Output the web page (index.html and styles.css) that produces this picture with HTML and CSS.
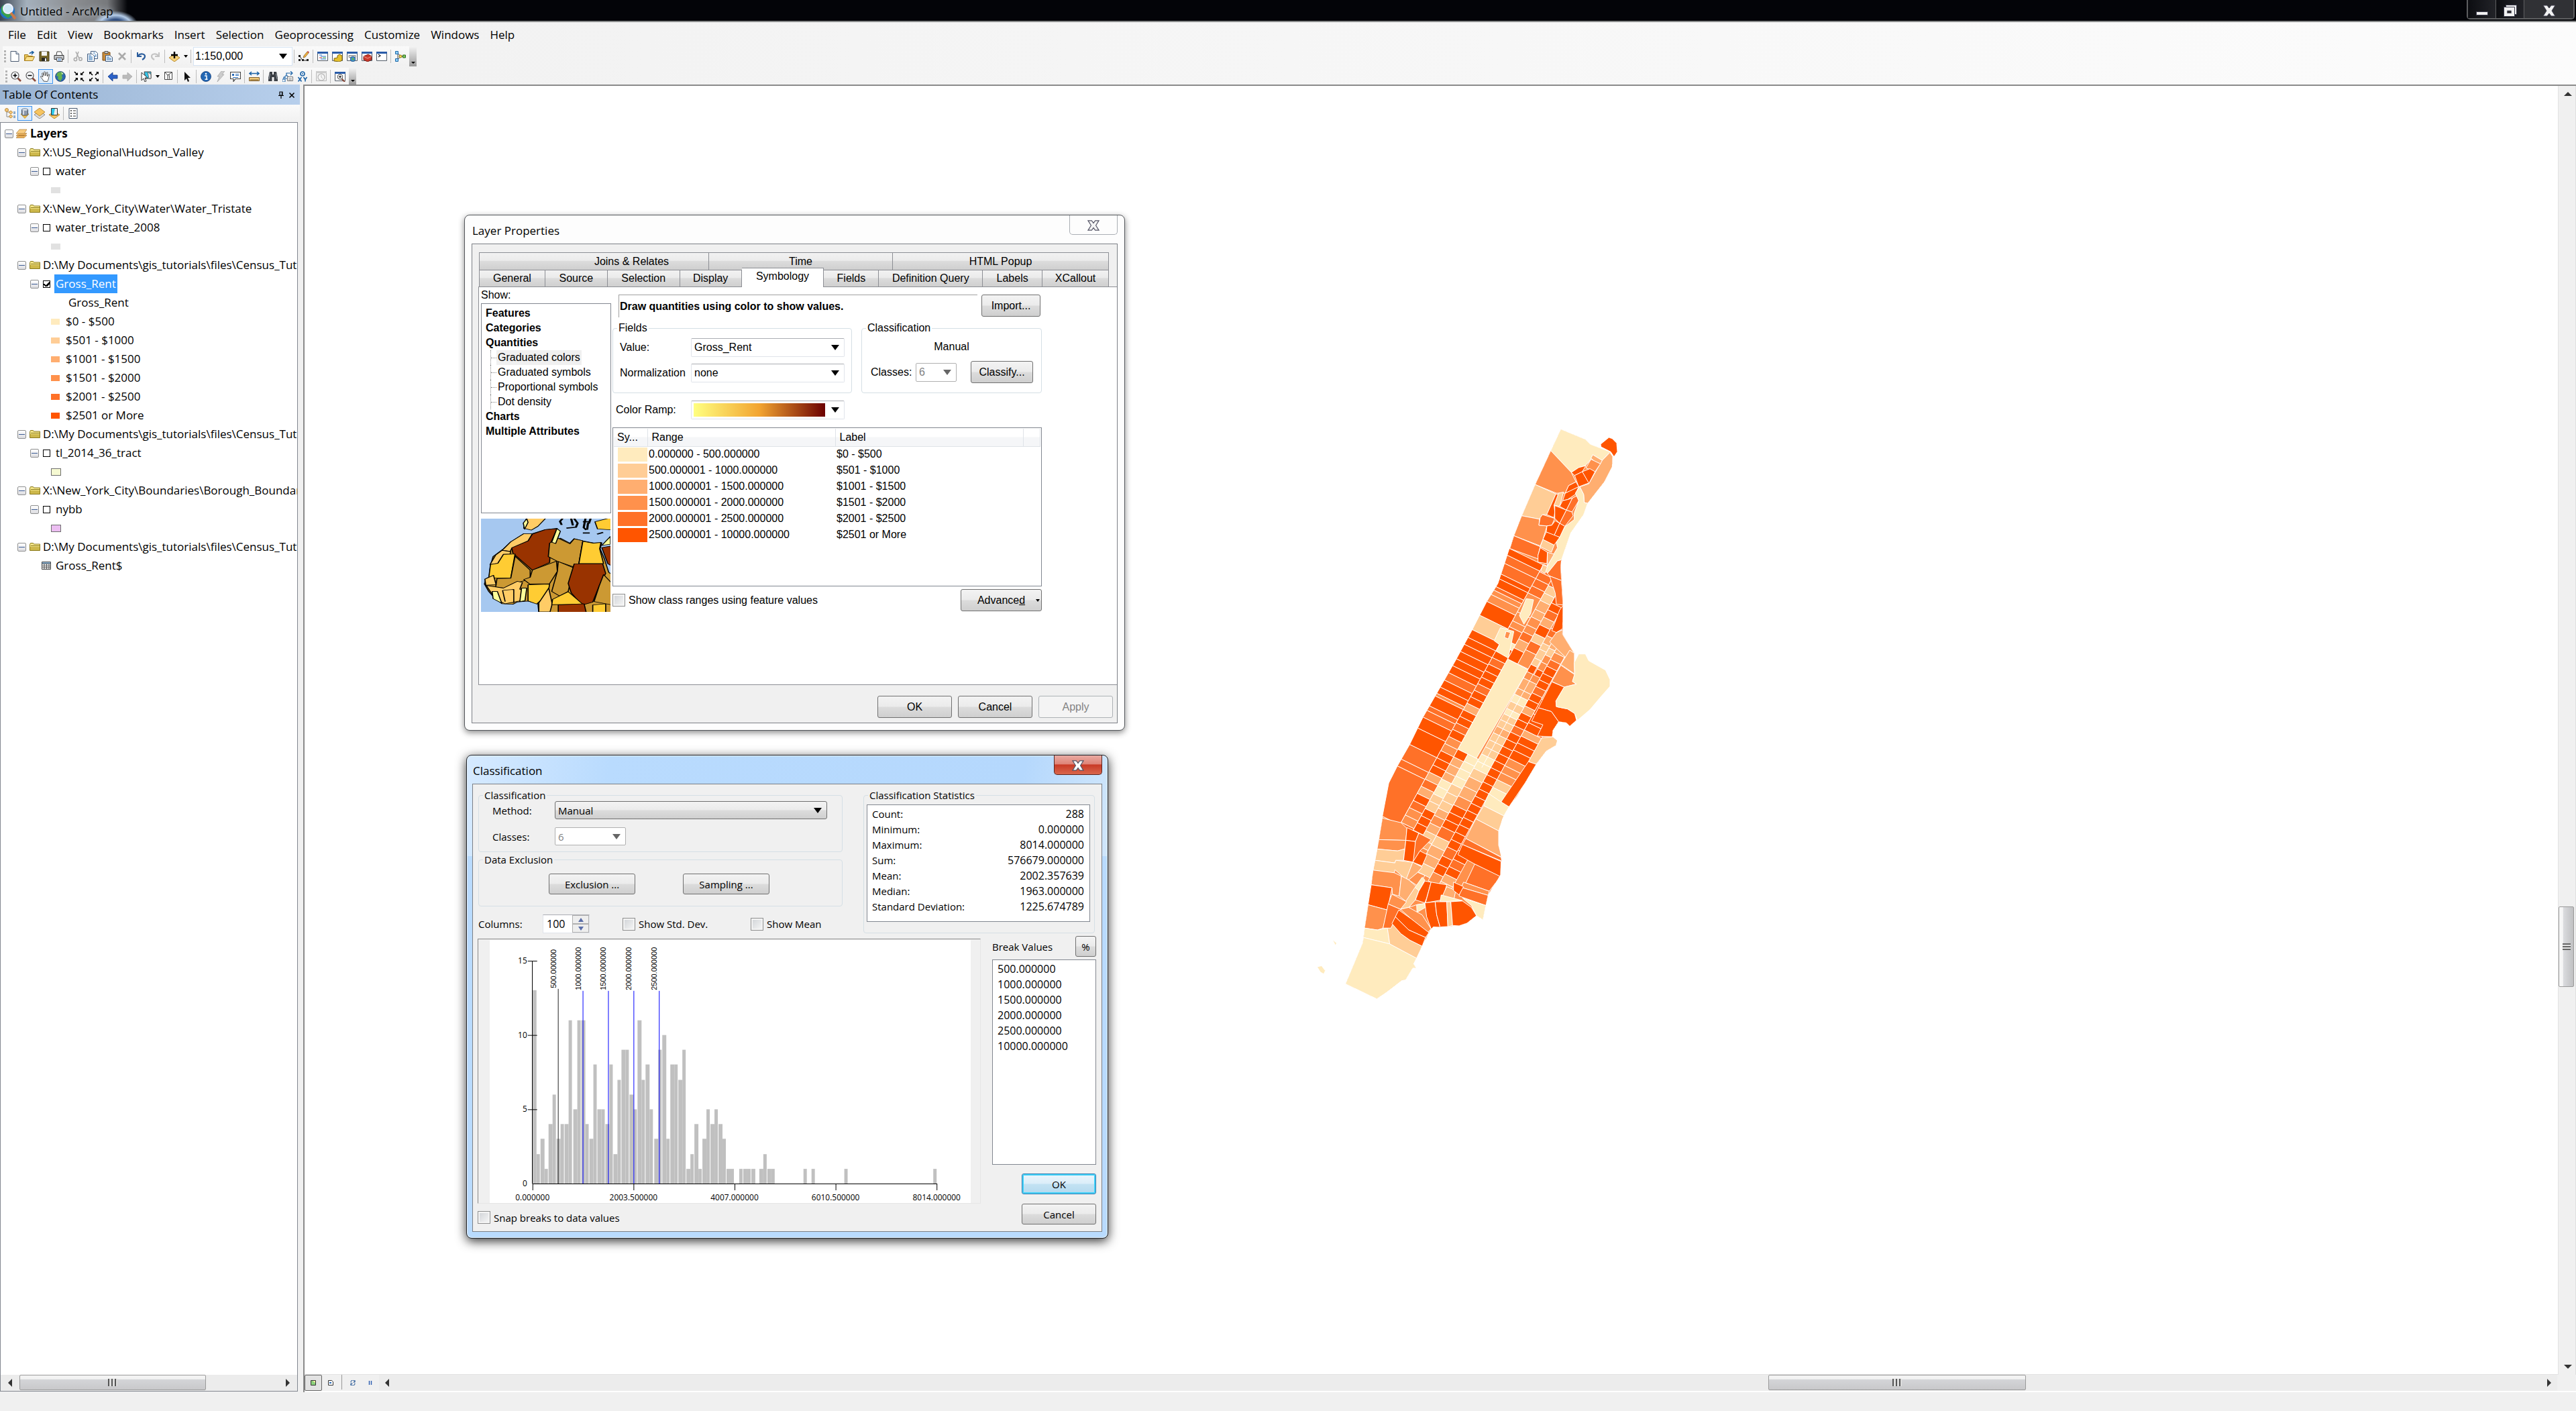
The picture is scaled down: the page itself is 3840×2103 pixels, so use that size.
FILE: index.html
```html
<!DOCTYPE html>
<html lang="en">
<head>
<meta charset="utf-8">
<title>Untitled - ArcMap</title>
<link rel="stylesheet" href="styles.css">
</head>
<body>
<svg class="defs" aria-hidden="true">
  <symbol id="i-new" viewBox="0 0 16 16"><path d="M2 .5h8l4 4v11H2z" fill="#fff" stroke="#4a5a70"/><path d="M10 .5v4h4" fill="#dbe6f2" stroke="#4a5a70"/></symbol>
  <symbol id="i-open" viewBox="0 0 16 16"><path d="M.5 14.500v-9h5l1 2h6v7z" fill="#e8c65a" stroke="#a67c1c"/><path d="M.5 14.500l3-6h12l-3 6z" fill="#fbe08a" stroke="#a67c1c"/><path d="M8 4c1-2 3-2 5-2m-2-2l3 2-3 3" fill="none" stroke="#1c5fa0" stroke-width="1.500"/></symbol>
  <symbol id="i-save" viewBox="0 0 16 16"><path d="M1 1h14v14H1z" fill="#7a6a2a" stroke="#3c3514"/><path d="M4 1h8v6H4z" fill="#f4f4f4"/><path d="M4 10h8v5H4z" fill="#2c2a22"/><path d="M9 11h2v4H9z" fill="#fff"/></symbol>
  <symbol id="i-print" viewBox="0 0 16 16"><path d="M4 6l1-5h6l2 5" fill="#fff" stroke="#444"/><path d="M1 6.500h14v6H1z" fill="#c9ccd0" stroke="#333"/><path d="M4 10h8l1 5.500H5z" fill="#fff" stroke="#444"/><path d="M6 12h5M6 14h5" stroke="#3a78c0"/></symbol>
  <symbol id="i-cut" viewBox="0 0 16 16"><path d="M5 1l5 10M9 1L6 10" stroke="#aaa" stroke-width="1.500"/><circle cx="4.500" cy="12.500" r="2.200" fill="none" stroke="#aaa" stroke-width="1.500"/><circle cx="12" cy="12" r="2.200" fill="none" stroke="#aaa" stroke-width="1.500"/></symbol>
  <symbol id="i-copy" viewBox="0 0 16 16"><path d="M5.500.5h7l3 3v8h-10z" fill="#fff" stroke="#3d5a80"/><path d="M.5 4.500h7l3 3v8H.5z" fill="#fff" stroke="#3d5a80"/><path d="M2 7h4M2 9h6M2 11h6M2 13h6M9 3h3M11 6h3M11 8h3" stroke="#2d72b8"/></symbol>
  <symbol id="i-paste" viewBox="0 0 16 16"><path d="M1 2h11v12H1z" fill="#c98c3c" stroke="#7a4c14"/><path d="M4 .5h5v3H4z" fill="#ccc" stroke="#555"/><path d="M5.500 6.500h6l4 3v6h-10z" fill="#fff" stroke="#3d5a80"/><path d="M7 9h4M7 11h7M7 13h7" stroke="#2d72b8"/></symbol>
  <symbol id="i-del" viewBox="0 0 16 16"><path d="M3 3l10 10M13 3L3 13" stroke="#aaa" stroke-width="2.600"/></symbol>
  <symbol id="i-undo" viewBox="0 0 16 16"><path d="M3 2v6h6" fill="none" stroke="#2a5c9c" stroke-width="2"/><path d="M4 7c3-4 10-3 10 1 0 3-2 4-4 5" fill="none" stroke="#2a5c9c" stroke-width="2.200"/></symbol>
  <symbol id="i-redo" viewBox="0 0 16 16"><path d="M13 2v6H7" fill="none" stroke="#c4c4c4" stroke-width="2"/><path d="M12 7c-3-4-10-3-10 1 0 3 2 4 4 5" fill="none" stroke="#c4c4c4" stroke-width="2.200"/></symbol>
  <symbol id="i-add" viewBox="0 0 16 16"><path d="M8 5l8 5-8 6-8-6z" fill="#f7d27a" stroke="#b98a2c"/><path d="M8 1v10M3 6h10" stroke="#000" stroke-width="2.400"/></symbol>
  <symbol id="i-editor" viewBox="0 0 16 16"><path d="M2 8l4 6h8" fill="none" stroke="#222"/><path d="M0 6h3v3H0zM5 12h3v3H5zM12 12h3v3h-3zM0 12h3v3H0z" fill="#222"/><path d="M7 10l1-3 5-6 2 2-5 6z" fill="#f0b040" stroke="#7a5a2a" stroke-width=".7"/><path d="M13 1l2 2 1-1-2-2z" fill="#c8343c"/></symbol>
  <symbol id="i-win" viewBox="0 0 16 16"><path d="M.5 1.500h15v13H.5z" fill="#fff" stroke="#555e6a"/><path d="M0 1h16v3H0z" fill="#2a5ca8"/></symbol>
  <symbol id="i-wtoc" viewBox="0 0 16 16"><use href="#i-win"/><path d="M3 6h4M5 8h8M5 12h8" stroke="#2a72c8"/><path d="M3 10h4" stroke="#c33"/><path d="M8 10h5" stroke="#4a4"/></symbol>
  <symbol id="i-wcat" viewBox="0 0 16 16"><use href="#i-win"/><path d="M8 7l3-2 4 2v7l-4 2-8-1v-4l5-1z" fill="#e6c02c" stroke="#7c6410"/></symbol>
  <symbol id="i-wsearch" viewBox="0 0 16 16"><use href="#i-win"/><path d="M3 6.500h10v3H3z" fill="#ddd" stroke="#888"/><circle cx="9" cy="12" r="3.800" fill="#3f8ed0" stroke="#1e4c80" stroke-width=".8"/><path d="M7 11l3-1 1 3-2 1z" fill="#65b54a"/></symbol>
  <symbol id="i-wtool" viewBox="0 0 16 16"><use href="#i-win"/><path d="M3 8l7-3 5 3v5l-6 3-6-3z" fill="#cc3a2c" stroke="#7a1c14"/><path d="M3 8l6 3 6-3" fill="none" stroke="#f4a090"/></symbol>
  <symbol id="i-wpy" viewBox="0 0 16 16"><use href="#i-win"/><path d="M3 5l3 2-3 2" fill="none" stroke="#222" stroke-width="1.200"/></symbol>
  <symbol id="i-model" viewBox="0 0 16 16"><path d="M4 3v10M4 3l4 5h5M4 13l4-5" fill="none" stroke="#444"/><path d="M.5.5h4v4h-4zM.5 11.500h4v4h-4z" fill="#8fd0f8" stroke="#1e68a8"/><circle cx="8" cy="8" r="2" fill="#ffe050" stroke="#8a7010"/><path d="M11.500 6h4v4h-4z" fill="#7cc860" stroke="#2c6c1c"/></symbol>
  <symbol id="i-zin" viewBox="0 0 16 16"><path d="M10 10l5 5" stroke="#8a4a3a" stroke-width="2.600"/><circle cx="6.500" cy="6.500" r="5.500" fill="#fafcff" stroke="#555" stroke-width="1.200"/><path d="M6.500 3.500v6M3.500 6.500h6" stroke="#000" stroke-width="1.600"/></symbol>
  <symbol id="i-zout" viewBox="0 0 16 16"><path d="M10 10l5 5" stroke="#8a4a3a" stroke-width="2.600"/><circle cx="6.500" cy="6.500" r="5.500" fill="#fafcff" stroke="#555" stroke-width="1.200"/><path d="M3.500 6.500h6" stroke="#000" stroke-width="1.600"/></symbol>
  <symbol id="i-hand" viewBox="0 0 16 16"><path d="M5 15C4 12 1 10 .5 8 1 7 3 8 4 9L2.500 3.500C3 2 4 3 4.500 4l1 3L5.500 1.500C6 .5 7 .5 7.500 1.500L8 7l1.500-5c.5-1 1.500-.5 1.500.5L10.500 8l2-3c1-.5 1.500 0 1 1-1 3-1 7-3 9.500z" fill="#fff" stroke="#444" stroke-width=".9"/></symbol>
  <symbol id="i-globe" viewBox="0 0 16 16"><circle cx="8" cy="8" r="7.400" fill="#2c68b0" stroke="#1a3c6c" stroke-width=".8"/><path d="M4 2l6-1 3 3-3 2 1 4-3 5-4-4 1-3-3-1z" fill="#63b04c"/><path d="M9 2l3 1-1 2z" fill="#e8f4d8"/></symbol>
  <symbol id="i-fin" viewBox="0 0 16 16"><path d="M1 1l4 4M15 1l-4 4M1 15l4-4M15 15l-4-4" stroke="#000" stroke-width="1.600"/><path d="M6 2v4H2zM10 2v4h4zM6 14v-4H2zM10 14v-4h4z"/></symbol>
  <symbol id="i-fout" viewBox="0 0 16 16"><path d="M2 2l4 4M14 2l-4 4M2 14l4-4M14 14l-4-4" stroke="#000" stroke-width="1.600"/><path d="M1 5V1h4zM15 5V1h-4zM1 11v4h4zM15 11v4h-4z"/></symbol>
  <symbol id="i-back" viewBox="0 0 16 16"><path d="M1 8l7-6v4h7v5H8v4z" fill="#2c62c8" stroke="#173c86" stroke-width=".8"/></symbol>
  <symbol id="i-fwd" viewBox="0 0 16 16"><path d="M15 8L8 2v4H1v5h7v4z" fill="#bbb" stroke="#aaa" stroke-width=".8"/></symbol>
  <symbol id="i-sel" viewBox="0 0 16 16"><path d="M5 1h10v10H7z" fill="#35c4e8" stroke="#444"/><path d="M10 1l5 4v6l-3 0z" fill="#eee" stroke="#555" stroke-width=".8"/><path d="M1 2v12l3-3 2 5 2-1-2-5h4z" fill="#fff" stroke="#222" stroke-width=".9"/></symbol>
  <symbol id="i-clear" viewBox="0 0 16 16"><path d="M2.500 1.500h11v11h-11z" fill="#fff" stroke="#444"/><path d="M3 2l4 4v6M7 6l6-4M9 5l1 7" fill="none" stroke="#444"/></symbol>
  <symbol id="i-arrow" viewBox="0 0 16 16"><path d="M4 1v13l3-3 2 5 2-1-2-5h4z" fill="#111"/></symbol>
  <symbol id="i-info" viewBox="0 0 16 16"><circle cx="8" cy="8" r="7.500" fill="#2468b4" stroke="#163e78" stroke-width=".8"/><circle cx="8" cy="4" r="1.300" fill="#fff"/><path d="M6 7h3v5h1M6.500 12.200h4" fill="none" stroke="#fff" stroke-width="1.500"/></symbol>
  <symbol id="i-bolt" viewBox="0 0 16 16"><path d="M9 0h5l-4 5h3L3 16l3-8H3z" fill="#ccc" stroke="#aaa" stroke-width=".8"/></symbol>
  <symbol id="i-html" viewBox="0 0 16 16"><path d="M.5 1.500h15v10H8l-3 4v-4H.5z" fill="#fff" stroke="#444" stroke-width="1.200"/><path d="M3 4h3v3H3z" fill="#2a6cb8"/><path d="M8 4.500h5M8 6.500h5M4 9.500h8" stroke="#2a6cb8" stroke-width="1.200"/></symbol>
  <symbol id="i-meas" viewBox="0 0 16 16"><path d="M2 3.500h12M4 1L1 3.500 4 6M12 1l3 2.500L12 6" fill="none" stroke="#1b62a6" stroke-width="1.500"/><path d="M.5 9.500h15v5H.5z" fill="#f0c878" stroke="#7c5c2c"/><path d="M3 12v2M5 12v2M7 12v2M9 12v2M11 12v2M13 12v2" stroke="#5c4018" stroke-width=".8"/></symbol>
  <symbol id="i-bino" viewBox="0 0 16 16"><path d="M3 1h4v4h2V1h4l2 9v5H9.500V9h-3v6H1v-5z" fill="#3c4046"/><path d="M3.500 4L2 12M12.500 4L14 12" stroke="#9aa0a8"/></symbol>
  <symbol id="i-route" viewBox="0 0 16 16"><path d="M2 14V9h4V3h8M12 0l3 3-3 3" fill="none" stroke="#1b62a6" stroke-width="1.200"/><path d="M0 12h4v4H0zM4 7h4v4H4z" fill="#fff" stroke="#1b62a6"/><path d="M7.500 8.500h8v6h-8z" fill="#fff" stroke="#777"/><path d="M9 11h5M9 13h5" stroke="#888"/></symbol>
  <symbol id="i-xy" viewBox="0 0 16 16"><circle cx="8" cy="4" r="3" fill="#fff" stroke="#1b62a6" stroke-width="1.600"/><circle cx="8" cy="4" r="1" fill="#1b62a6"/><path d="M1.500 9l5 6.500M6.500 9l-5 6.500M9.500 9l2.500 3.500L14.500 9M12 12v3.500" fill="none" stroke="#1b62a6" stroke-width="1.600"/></symbol>
  <symbol id="i-time" viewBox="0 0 16 16"><path d="M.5.5h15v14H.5z" fill="#eee" stroke="#bbb"/><path d="M0 0h16v3H0z" fill="#ccc"/><circle cx="8" cy="9" r="5" fill="#f5f5f5" stroke="#bbb" stroke-width="1.300"/><path d="M8 6v3l2 2" fill="none" stroke="#bbb"/></symbol>
  <symbol id="i-view" viewBox="0 0 16 16"><use href="#i-win"/><path d="M10 11l5 5" stroke="#8a4a3a" stroke-width="2.200"/><circle cx="8" cy="8.500" r="3.800" fill="#fff" stroke="#444"/><path d="M8 6.500v4M6 8.500h4" stroke="#000"/></symbol>
  <symbol id="i-tlist" viewBox="0 0 16 16"><path d="M3 4v9h4M3 6h4" fill="none" stroke="#888"/><circle cx="3" cy="3" r="2.500" fill="#f6c878" stroke="#b98a3c"/><path d="M9 4l3 2.500-3 2.500-3-2.500zM9 10l3 2.500L9 15l-3-2.500z" fill="#f6c878" stroke="#b98a3c"/><path d="M13 6h3M13 8h3M13 12h3M13 14h3" stroke="#27639c"/></symbol>
  <symbol id="i-cyl" viewBox="0 0 16 16"><path d="M2 9l6-1 6 1-6 6.500z" fill="#f4c04c" stroke="#c08c20" stroke-width=".8"/><path d="M3.500 2.500c0-2 9-2 9 0v7c0 2-9 2-9 0z" fill="#8b98aa" stroke="#465468"/><ellipse cx="8" cy="2.500" rx="4" ry="1.300" fill="#dfe6ee"/><path d="M6 4v6" stroke="#e8eef4" stroke-width="1.500"/></symbol>
  <symbol id="i-dia" viewBox="0 0 16 16"><path d="M8 5l8 5-8 6-8-6z" fill="#ddd" stroke="#777" stroke-width=".8"/><path d="M8 0l8 6-8 6-8-6z" fill="#f6c460" stroke="#b07c20" stroke-width=".8"/></symbol>
  <symbol id="i-tsel" viewBox="0 0 16 16"><path d="M8 6l8 4-8 6-8-6z" fill="#f6c460" stroke="#b07c20" stroke-width=".8"/><path d="M3.500.5h9v10h-9z" fill="#eee" stroke="#333"/><path d="M4 1h5L7 10H4z" fill="#2cc8e8"/></symbol>
  <symbol id="i-opt" viewBox="0 0 16 16"><path d="M2 .5h12v15H2z" fill="#fff" stroke="#4a5a70"/><circle cx="5" cy="4" r="1" fill="#333"/><circle cx="5" cy="8" r="1" fill="#333"/><circle cx="5" cy="12" r="1" fill="#333"/><path d="M8 4h4M8 8h4M8 12h4" stroke="#333"/></symbol>
  <symbol id="i-folder" viewBox="0 0 16 12"><path d="M.5 2.500l1-2h4l1 1.500h9v9.500H.5z" fill="#f3e58a" stroke="#8a7a1c"/><path d="M2 4.500h13" stroke="#8a7a1c"/><path d="M1 6h14v5H1z" fill="#cdb84c"/></symbol>
  <symbol id="i-layers" viewBox="0 0 16 14"><path d="M4 9.500h12L12 13.500H0zM4 6.500h12L12 10.500H0z" fill="#efb45c" stroke="#a8742c" stroke-width=".7"/><path d="M5 1h11l-4 6H0z" fill="#f8cc80" stroke="#b07c34" stroke-width=".7"/></symbol>
  <symbol id="i-table" viewBox="0 0 14 12"><path d="M.5.5h13v11H.5z" fill="#fff" stroke="#444"/><path d="M1 1h12v2H1z" fill="#8ab0d0"/><path d="M0 3.500h14M0 6.500h14M0 9h14M4 3v9M7.500 3v9M11 3v9" stroke="#555"/></symbol>
</svg>

<header class="titlebar">
  <svg class="app-icon" viewBox="0 0 24 28"><circle cx="11" cy="14" r="11" fill="#1f73c4"/><path d="M2 8c4-6 12-7 17-2l-4 6 5 6-8 6-6-4-4-4z" fill="#3aa04c"/><circle cx="12" cy="10" r="7" fill="#cfeaf8" stroke="#eef" stroke-width="2"/><path d="M16 16l7 9" stroke="#c87a4c" stroke-width="4"/></svg>
  <h1>Untitled - ArcMap</h1>
  <div class="win-ctl">
    <button aria-label="Minimize"><svg viewBox="0 0 20 18"><path d="M1.500 10.500h17v5h-17z" fill="#f2f2f2" stroke="#3c3c4c"/></svg></button>
    <button aria-label="Restore"><svg viewBox="0 0 20 18"><path d="M3.500.5h16v14h-16z" fill="#f2f2f2" stroke="#3c3c4c"/><path d="M.5 3.500h16v14H.5z" fill="#f2f2f2" stroke="#3c3c4c"/><path d="M5.500 9h6v3.500h-6z" fill="#222" stroke="#667"/></svg></button>
    <button class="x" aria-label="Close"><svg viewBox="0 0 20 18"><path d="M1 1h6l3 4 3-4h6l-5 8 5 8h-6l-3-4-3 4H1l5-8z" fill="#f2f2f2" stroke="#3c3c4c"/></svg></button>
  </div>
</header>

<nav class="menubar"><button>File</button><button>Edit</button><button>View</button><button>Bookmarks</button><button>Insert</button><button>Selection</button><button>Geoprocessing</button><button>Customize</button><button>Windows</button><button>Help</button></nav>

<div class="toolbars">
  <div class="toolbar standard">
    <i class="grip"></i>
    <button aria-label="New"><svg><use href="#i-new"/></svg></button><button aria-label="Open"><svg><use href="#i-open"/></svg></button><button aria-label="Save"><svg><use href="#i-save"/></svg></button><button aria-label="Print"><svg><use href="#i-print"/></svg></button><i class="sep"></i>
    <button aria-label="Cut"><svg><use href="#i-cut"/></svg></button><button aria-label="Copy"><svg><use href="#i-copy"/></svg></button><button aria-label="Paste"><svg><use href="#i-paste"/></svg></button><button aria-label="Delete"><svg><use href="#i-del"/></svg></button><i class="sep"></i>
    <button aria-label="Undo"><svg><use href="#i-undo"/></svg></button><button aria-label="Redo"><svg><use href="#i-redo"/></svg></button><i class="sep"></i>
    <button aria-label="Add Data"><svg><use href="#i-add"/></svg></button><button class="drop" aria-label="Add Data menu"><i class="caret"></i></button><i class="sep"></i>
    <span class="combo scale"><select aria-label="Map scale"><option>1:150,000</option></select></span><i class="sep"></i>
    <button aria-label="Editor Toolbar"><svg><use href="#i-editor"/></svg></button><i class="sep"></i>
    <button aria-label="Table Of Contents"><svg><use href="#i-wtoc"/></svg></button><button aria-label="Catalog"><svg><use href="#i-wcat"/></svg></button><button aria-label="Search"><svg><use href="#i-wsearch"/></svg></button><button aria-label="ArcToolbox"><svg><use href="#i-wtool"/></svg></button><button aria-label="Python"><svg><use href="#i-wpy"/></svg></button><i class="sep"></i>
    <button aria-label="ModelBuilder"><svg><use href="#i-model"/></svg></button>
    <button class="more" aria-label="Toolbar options"><i class="caret"></i></button>
  </div>
  <div class="toolbar tools">
    <i class="grip"></i>
    <button aria-label="Zoom In"><svg><use href="#i-zin"/></svg></button><button aria-label="Zoom Out"><svg><use href="#i-zout"/></svg></button><button class="on" aria-label="Pan"><svg><use href="#i-hand"/></svg></button><button aria-label="Full Extent"><svg><use href="#i-globe"/></svg></button><i class="sep"></i>
    <button aria-label="Fixed Zoom In"><svg><use href="#i-fin"/></svg></button><button aria-label="Fixed Zoom Out"><svg><use href="#i-fout"/></svg></button><i class="sep"></i>
    <button aria-label="Back"><svg><use href="#i-back"/></svg></button><button aria-label="Forward"><svg><use href="#i-fwd"/></svg></button><i class="sep"></i>
    <button aria-label="Select Features"><svg><use href="#i-sel"/></svg></button><button class="drop" aria-label="Selection menu"><i class="caret"></i></button><button aria-label="Clear Selection"><svg><use href="#i-clear"/></svg></button><i class="sep"></i>
    <button aria-label="Select Elements"><svg><use href="#i-arrow"/></svg></button><i class="sep"></i>
    <button aria-label="Identify"><svg><use href="#i-info"/></svg></button><button aria-label="Hyperlink"><svg><use href="#i-bolt"/></svg></button><button aria-label="HTML Popup"><svg><use href="#i-html"/></svg></button><i class="sep"></i>
    <button aria-label="Measure"><svg><use href="#i-meas"/></svg></button><i class="sep"></i>
    <button aria-label="Find"><svg><use href="#i-bino"/></svg></button><button aria-label="Find Route"><svg><use href="#i-route"/></svg></button><button aria-label="Go To XY"><svg><use href="#i-xy"/></svg></button><i class="sep"></i>
    <button aria-label="Time Slider"><svg><use href="#i-time"/></svg></button><i class="sep"></i>
    <button aria-label="Viewer Window"><svg><use href="#i-view"/></svg></button>
    <button class="more" aria-label="Toolbar options"><i class="caret"></i></button>
  </div>
</div>

<div class="main">
  <aside class="toc">
    <div class="toc-head"><h2>Table Of Contents</h2>
      <button aria-label="Auto hide"><svg viewBox="0 0 10 12"><path d="M3 1h4v5H3zM6.500 1v5M1 6.500h8M5 7v4" fill="none" stroke="#000" stroke-width="1.200"/></svg></button>
      <button aria-label="Close"><svg viewBox="0 0 10 12"><path d="M1.500 2.500l7 7M8.500 2.500l-7 7" stroke="#000" stroke-width="1.600"/></svg></button></div>
    <div class="toolbar toc-tools">
      <button aria-label="List By Drawing Order"><svg><use href="#i-tlist"/></svg></button><button class="on" aria-label="List By Source"><svg><use href="#i-cyl"/></svg></button><button aria-label="List By Visibility"><svg><use href="#i-dia"/></svg></button><button aria-label="List By Selection"><svg><use href="#i-tsel"/></svg></button><i class="sep"></i><button aria-label="Options"><svg><use href="#i-opt"/></svg></button>
    </div>
    <div class="tree-box">
      <ul class="tree">
        <li class="l0"><button class="exp" aria-label="Collapse"></button><svg class="ic"><use href="#i-layers"/></svg><b>Layers</b></li>
        <li class="l1"><button class="exp" aria-label="Collapse"></button><svg class="ic"><use href="#i-folder"/></svg><span>X:\US_Regional\Hudson_Valley</span></li>
        <li class="l2"><button class="exp" aria-label="Collapse"></button><input type="checkbox" id="t1"><label for="t1">water</label></li>
        <li class="sw"><i class="w"></i></li>
        <li class="l1"><button class="exp" aria-label="Collapse"></button><svg class="ic"><use href="#i-folder"/></svg><span>X:\New_York_City\Water\Water_Tristate</span></li>
        <li class="l2"><button class="exp" aria-label="Collapse"></button><input type="checkbox" id="t2"><label for="t2">water_tristate_2008</label></li>
        <li class="sw"><i class="w"></i></li>
        <li class="l1"><button class="exp" aria-label="Collapse"></button><svg class="ic"><use href="#i-folder"/></svg><span>D:\My Documents\gis_tutorials\files\Census_Tut</span></li>
        <li class="l2"><button class="exp" aria-label="Collapse"></button><input type="checkbox" id="t3" checked><label for="t3" class="hl">Gross_Rent</label></li>
        <li class="field">Gross_Rent</li>
        <li class="sw"><i class="c1"></i>$0 - $500</li>
        <li class="sw"><i class="c2"></i>$501 - $1000</li>
        <li class="sw"><i class="c3"></i>$1001 - $1500</li>
        <li class="sw"><i class="c4"></i>$1501 - $2000</li>
        <li class="sw"><i class="c5"></i>$2001 - $2500</li>
        <li class="sw"><i class="c6"></i>$2501 or More</li>
        <li class="l1"><button class="exp" aria-label="Collapse"></button><svg class="ic"><use href="#i-folder"/></svg><span>D:\My Documents\gis_tutorials\files\Census_Tut</span></li>
        <li class="l2"><button class="exp" aria-label="Collapse"></button><input type="checkbox" id="t4"><label for="t4">tl_2014_36_tract</label></li>
        <li class="sw"><i class="tract"></i></li>
        <li class="l1"><button class="exp" aria-label="Collapse"></button><svg class="ic"><use href="#i-folder"/></svg><span>X:\New_York_City\Boundaries\Borough_Boundar</span></li>
        <li class="l2"><button class="exp" aria-label="Collapse"></button><input type="checkbox" id="t5"><label for="t5">nybb</label></li>
        <li class="sw"><i class="nybb"></i></li>
        <li class="l1"><button class="exp" aria-label="Collapse"></button><svg class="ic"><use href="#i-folder"/></svg><span>D:\My Documents\gis_tutorials\files\Census_Tut</span></li>
        <li class="tbl"><svg class="ic"><use href="#i-table"/></svg><span>Gross_Rent$</span></li>
      </ul>
      <div class="hscroll"><button class="al" aria-label="Scroll left"></button><div class="track"><i class="thumb toc-thumb"></i></div><button class="ar" aria-label="Scroll right"></button></div>
    </div>
  </aside>

  <section class="data-view">
    <div class="canvas">
      <svg class="nyc" viewBox="0 0 1560 1568" preserveAspectRatio="none" role="img" aria-label="Median gross rent by census tract"></svg>

      <div class="dialog props" role="dialog" aria-label="Layer Properties">
        <div class="dlg-title"><h2>Layer Properties</h2><button class="dlg-x" aria-label="Close"><svg viewBox="0 0 20 18"><path d="M1 1h6l3 4 3-4h6l-5 8 5 8h-6l-3-4-3 4H1l5-8z" fill="#f4f4f4" stroke="#556" stroke-width="1.300"/></svg></button></div>
        <div class="client">
          <div class="tabs r1"><button>Joins &amp; Relates</button><button>Time</button><button>HTML Popup</button></div>
          <div class="tabs r2"><button>General</button><button>Source</button><button>Selection</button><button>Display</button><button class="active">Symbology</button><button>Fields</button><button>Definition Query</button><button>Labels</button><button>XCallout</button></div>
          <div class="panel">
            <div class="show">
              <div class="show-lbl">Show:</div>
              <ul class="show-list">
                <li><b>Features</b></li><li><b>Categories</b></li><li><b>Quantities</b></li>
                <li class="sub"><span class="cur">Graduated colors</span></li><li class="sub"><span>Graduated symbols</span></li><li class="sub"><span>Proportional symbols</span></li><li class="sub last"><span>Dot density</span></li>
                <li><b>Charts</b></li><li><b>Multiple Attributes</b></li>
              </ul>
              <svg class="africa" viewBox="56 221 300 415" preserveAspectRatio="none" aria-hidden="true">
                <path d="M56 221h300v415H56z" fill="#a6c8f0"/>
                <g stroke="#000" stroke-width="2.500" stroke-linejoin="round">
                  <path d="M155 288L175 288 205 270 232 264 238 285 228 322 240 308 262 330 272 310 292 320 318 330 336 328 332 355 342 400 352 460 360 470V640H190L188 600 165 588 140 592 130 602 105 600 88 575 74 545 64 512 68 488 75 480 78 430 84 390 108 355 125 325z" fill="#c93"/>
                  <path d="M162 215h46l-20 40-15 17-18-8z" fill="#fc6"/><path d="M162 221l-8 20 3 27 8-30z" fill="#ff9"/>
                  <path d="M245 221l-6 12 4 16M272 221l8 20-4 18-22 4M265 221l4 30M298 221l-4 40 6 10M292 235h14M304 240l-2 30M310 221l-4 22" fill="none" stroke-width="5"/>
                  <path d="M292 285h16M325 290l14-8" stroke-width="5"/>
                  <path d="M320 235l40-20v56l-34-4z" fill="#fc3"/><path d="M356 300l-20 40 20-5z" fill="#ff9"/><path d="M336 350l24-8v90l-10-10z" fill="#930"/>
                  <path d="M205 270l27-4-14 62-3 88-40 34-45-75-3-25 38-30 10-30z" fill="#930"/>
                  <path d="M155 288l20 0-10 32-37 30-4 16-19-4 20-38z" fill="#fc6"/>
                  <path d="M105 362l20 6-2 12-15 0-13 40-18 5 13-42z" fill="#fc6"/>
                  <path d="M95 420l13-40 27-2-10 107-51 0 4-60z" fill="#fc3"/>
                  <path d="M135 388l35 62v40l-38 20-14 22-28-6 3-38 32-2z" fill="#c93"/>
                  <path d="M175 450l56-40 2 46-18 54-46 2-14-20 15-10z" fill="#c93"/>
                  <path d="M215 330l20-22 27 25 10-22 20 8-9 100-5 22-46-31-20-20z" fill="#c93"/>
                  <path d="M232 265l8 12-11 55-9-6z" fill="#ff9"/>
                  <path d="M292 322l24 8 18-3-3 28 9 66-57-1z" fill="#fc3"/>
                  <path d="M235 412l36 28-13 105-20 20-18-20 13-90z" fill="#c93"/>
                  <path d="M272 422h66l7 43-15 55-15 72-25 14-25-55-7-42z" fill="#930"/>
                  <path d="M165 515l50-3-4 45-26 44-20-14z" fill="#fc3"/>
                  <path d="M65 490l20-17 6 42-24 2z" fill="#fc6"/>
                  <path d="M68 518l40 12 32-30 12 5-6 30 14 10-8 40-40 15-22-20z" fill="#fc6"/><path d="M82 545l12 0 10 52-20-20zM150 530h12l-4 56-12 4z" fill="#ff9"/><path d="M106 540l26-4v60M106 540l6 50" fill="none"/>
                  <path d="M213 530l8 70-5 36h-26v-40z" fill="#fc6"/>
                  <path d="M222 580l36-34 34 56-72 2z" fill="#fc3"/><path d="M235 605l60-5 5 40h-65z" fill="#930"/><path d="M315 605l30-5v40h-30z" fill="#fc3"/>
                  <path d="M340 470l20 40v95l-42-15 12-70z" fill="#c93"/>
                </g>
              </svg>
            </div>
            <div class="quant">
              <div class="desc-row"><b class="desc">Draw quantities using color to show values.</b><button class="btn">Import...</button></div>
              <div class="groups">
                <fieldset class="fields"><legend>Fields</legend>
                  <label for="val">Value:</label><span class="combo"><select id="val"><option>Gross_Rent</option></select></span>
                  <label for="norm">Normalization</label><span class="combo"><select id="norm"><option>none</option></select></span>
                </fieldset>
                <fieldset class="cls"><legend>Classification</legend>
                  <div class="manual">Manual</div>
                  <div class="cls-row"><label for="ncls">Classes:</label><span class="combo off"><select id="ncls" disabled><option>6</option></select></span><button class="btn">Classify...</button></div>
                </fieldset>
              </div>
              <div class="ramp-row"><span id="ramp-lbl">Color Ramp:</span><button class="combo ramp" aria-labelledby="ramp-lbl"><i></i></button></div>
              <div class="grid-box">
                <table>
                  <thead><tr><th>Sy...</th><th>Range</th><th>Label</th><th></th></tr></thead>
                  <tbody>
                    <tr><td><i class="c1"></i></td><td>0.000000 - 500.000000</td><td>$0 - $500</td><td></td></tr>
                    <tr><td><i class="c2"></i></td><td>500.000001 - 1000.000000</td><td>$501 - $1000</td><td></td></tr>
                    <tr><td><i class="c3"></i></td><td>1000.000001 - 1500.000000</td><td>$1001 - $1500</td><td></td></tr>
                    <tr><td><i class="c4"></i></td><td>1500.000001 - 2000.000000</td><td>$1501 - $2000</td><td></td></tr>
                    <tr><td><i class="c5"></i></td><td>2000.000001 - 2500.000000</td><td>$2001 - $2500</td><td></td></tr>
                    <tr><td><i class="c6"></i></td><td>2500.000001 - 10000.000000</td><td>$2501 or More</td><td></td></tr>
                  </tbody>
                </table>
              </div>
              <div class="adv-row"><label class="check"><input type="checkbox">Show class ranges using feature values</label><button class="btn adv">Advance<u>d</u><i class="caret"></i></button></div>
            </div>
          </div>
          <div class="dlg-foot"><button class="btn">OK</button><button class="btn">Cancel</button><button class="btn" disabled>Apply</button></div>
        </div>
      </div>

      <div class="dialog classify" role="dialog" aria-label="Classification">
        <div class="dlg-title"><h2>Classification</h2><button class="dlg-x red" aria-label="Close"><svg viewBox="0 0 20 18"><path d="M1 1h6l3 4 3-4h6l-5 8 5 8h-6l-3-4-3 4H1l5-8z" fill="#fff" stroke="#556" stroke-width="1.300"/></svg></button></div>
        <div class="client">
          <div class="top">
            <div class="opts">
              <fieldset class="method"><legend>Classification</legend>
                <label for="meth">Method:</label><span class="combo grad"><select id="meth"><option>Manual</option></select></span>
                <label for="cls2">Classes:</label><span class="combo off short"><select id="cls2" disabled><option>6</option></select></span>
              </fieldset>
              <fieldset class="excl"><legend>Data Exclusion</legend><button class="btn">Exclusion ...</button><button class="btn">Sampling ...</button></fieldset>
              <div class="cols"><label for="ncol">Columns:</label><span class="spin"><input type="number" id="ncol" value="100"><span><button aria-label="Increase"><i class="up"></i></button><button aria-label="Decrease"><i class="down"></i></button></span></span><label class="check std"><input type="checkbox">Show Std. Dev.</label><label class="check"><input type="checkbox">Show Mean</label></div>
            </div>
            <fieldset class="stats"><legend>Classification Statistics</legend>
              <table>
                <tr><th>Count:</th><td>288</td></tr><tr><th>Minimum:</th><td>0.000000</td></tr><tr><th>Maximum:</th><td>8014.000000</td></tr><tr><th>Sum:</th><td>576679.000000</td></tr><tr><th>Mean:</th><td>2002.357639</td></tr><tr><th>Median:</th><td>1963.000000</td></tr><tr><th>Standard Deviation:</th><td>1225.674789</td></tr>
              </table>
            </fieldset>
          </div>
          <div class="bottom">
            <div class="hist-col">
              <div class="hist"><svg id="hist" viewBox="0 0 717 393" role="img" aria-label="Histogram of gross rent"></svg></div>
              <label class="check"><input type="checkbox">Snap breaks to data values</label>
            </div>
            <div class="breaks">
              <div class="brk-head"><span>Break Values</span><button class="btn">%</button></div>
              <ul><li>500.000000</li><li>1000.000000</li><li>1500.000000</li><li>2000.000000</li><li>2500.000000</li><li>10000.000000</li></ul>
              <button class="btn def">OK</button><button class="btn">Cancel</button>
            </div>
          </div>
        </div>
      </div>
    </div>
    <div class="vscroll"><button class="au" aria-label="Scroll up"></button><div class="track"><i class="thumb"></i></div><button class="ad" aria-label="Scroll down"></button></div>
    <div class="view-bar">
      <button class="vb on" aria-label="Data View"><svg viewBox="0 0 8 8"><path d="M.5.5h7v7h-7z" fill="#8bd07c" stroke="#333"/><path d="M3 1h4v3z" fill="#fff3a0"/></svg></button>
      <button class="vb" aria-label="Layout View"><svg viewBox="0 0 8 8"><path d="M.5.5h5l2 2v5h-7z" fill="#fff" stroke="#333"/><path d="M2 3h3v2H2z" fill="#2a6cb8"/></svg></button>
      <i class="vsep"></i>
      <button class="vb" aria-label="Refresh"><svg viewBox="0 0 8 8"><path d="M1 3.500A3 3 0 0 1 7 2.500M7 4.500A3 3 0 0 1 1 5.500M7 0v3H4.500M1 8V5h2.500" fill="none" stroke="#1b4f90"/></svg></button>
      <button class="vb" aria-label="Pause Drawing"><svg viewBox="0 0 8 8"><path d="M2.500 1v6M5.500 1v6" stroke="#2a5cb0" stroke-width="1.400"/></svg></button>
      <div class="hscroll"><button class="al" aria-label="Scroll left"></button><div class="track"><i class="thumb map-thumb"></i></div><button class="ar" aria-label="Scroll right"></button></div>
    </div>
  </section>
</div>
<footer class="status"></footer>
<script src="map.js"></script>
</body>
</html>
```
FILE: styles.css
```css
* { box-sizing: border-box; }
:root {
  --c1: #ffebbe; --c2: #ffcd96; --c3: #ffae70; --c4: #ff914c; --c5: #ff7128; --c6: #ff5500;
  --ui: "Open Sans", "Noto Sans", sans-serif;
  --sans: "Liberation Sans", Arial, sans-serif;
}
body { margin: 0; min-height: 100vh; display: flex; flex-direction: column; background: #f0f0f0; color: #000; font: 17px/22px var(--ui); overflow: hidden; }
h1, h2 { margin: 0; font: inherit; }
ul { margin: 0; padding: 0; list-style: none; }
button, input, select { font: inherit; color: inherit; margin: 0; padding: 0; }
button { border: 0; background: none; }
.defs { display: none; }
.c1 { background: var(--c1); } .c2 { background: var(--c2); } .c3 { background: var(--c3); }
.c4 { background: var(--c4); } .c5 { background: var(--c5); } .c6 { background: var(--c6); }
.caret { display: block; width: 0; height: 0; border: 3px solid transparent; border-top: 4px solid #000; border-bottom: 0; }

.titlebar { height: 33px; display: flex; align-items: flex-start; background: radial-gradient(ellipse 34px 22px at 172px 38px, #2c4a7c 40%, #b4cce8 70%, transparent), linear-gradient(90deg, #3c4654, #a4b0bc 40px, #8f9296 100px, #77797c 160px, transparent 190px), #030408; border-bottom: 2px solid #8a8c8c; }
.app-icon { width: 24px; height: 28px; margin: 3px 6px 0 0; }
.titlebar h1 { flex: 1; line-height: 34px; text-shadow: 0 0 8px #c8d4e0; }
.win-ctl { display: flex; height: 29px; margin-right: 2px; border: 2px solid #5d5e60; border-top: 0; border-radius: 0 0 5px 5px; }
.win-ctl button { width: 42px; border-right: 1px solid #5d5e60; background: linear-gradient(90deg, #0c0d11, #222328); }
.win-ctl button.x { width: 73px; border: 0; background: #303135; }
.win-ctl svg { width: 20px; height: 18px; vertical-align: top; margin-top: 4px; }

.menubar { height: 36px; padding: 2px 12px 0; display: flex; align-items: center; gap: 16px; background: linear-gradient(90deg, #f0f0f0, #fcfcfc); }
.toolbars { background: linear-gradient(90deg, #f0f0f0, #fcfcfc); display: flex; flex-direction: column; align-items: flex-start; gap: 2px; }
.toolbar { display: flex; align-items: center; background: linear-gradient(#fafafa, #f1f1f1); margin-left: 4px; }
.standard { height: 30px; }
.tools { height: 25px; margin-left: 6px; }
.toolbar button { width: 22px; height: 22px; display: grid; place-items: center; flex: none; }
.toolbar svg { width: 16px; height: 16px; }
.toolbar .on { border: 1px solid #3c94f0; background: #dcebfa; }
.toolbar .drop { width: 11px; }
.toolbar .more { width: 11px; height: 100%; margin-left: 2px; background: linear-gradient(#f4f4f4, #9a9a9a); place-items: end center; padding-bottom: 4px; }
.more .caret { border-top-width: 3px; }
.grip { width: 3px; height: 18px; margin: 0 2px; background: repeating-linear-gradient(#b4b4b4 0 3px, transparent 3px 5px); }
.sep { width: 6px; height: 20px; flex: none; background: linear-gradient(90deg, transparent 2px, #bdbdbd 2px 3px, transparent 3px); }

.combo { position: relative; display: block; height: 28px; border: 1px solid #e0e3ea; border-top-color: #abadb3; background: #fff; border-radius: 2px; }
.combo select { appearance: none; width: 100%; height: 100%; border: 0; background: none; padding: 0 0 0 4px; opacity: 1; }
.combo::after { content: ""; position: absolute; right: 7px; top: 50%; margin-top: -4px; border: 6px solid transparent; border-top: 8px solid #000; border-bottom: 0; pointer-events: none; }
.combo.off { color: #838383; border-color: #b0b0b0; }
.combo.off::after { border-top-color: #666; }
.combo.scale { width: 148px; font-family: var(--sans); font-size: 16px; border-color: #d6e4f4; border-radius: 0; }
.combo.scale select { padding-left: 2px; }

.main { flex: 1; display: flex; gap: 5px; min-height: 0; }
.toc { width: 447px; flex: none; display: flex; flex-direction: column; }
.toc-head { height: 30px; padding: 0 4px; display: flex; align-items: center; background: linear-gradient(90deg, #9ab4d3, #b7cfec); }
.toc-head h2 { flex: 1; line-height: 34px; }
.toc-head button { width: 16px; height: 20px; }
.toc-head svg { width: 10px; height: 12px; }
.toc-tools { height: 26px; margin: 0; padding-left: 4px; }
.tree-box { flex: 1; width: 444px; margin-bottom: 1px; border: 1px solid #828790; background: #fff; display: flex; flex-direction: column; overflow: hidden; }
.tree { flex: 1; padding-top: 2px; }
.tree li { height: 28px; display: flex; align-items: center; white-space: nowrap; }
.tree .l0 { padding-left: 6px; } .tree .l1 { padding-left: 25px; } .tree .l2 { padding-left: 44px; }
.exp { width: 13px; height: 13px; flex: none; border: 1px solid #8e8f8f; border-radius: 2px; background: linear-gradient(#3c5c94, #3c5c94) center / 9px 1px no-repeat, linear-gradient(#fff, #dcdce0); }
.ic { width: 16px; height: 12px; flex: none; margin: 0 4px 0 5px; }
.l0 .ic { height: 14px; margin-left: 4px; margin-right: 5px; }
.tree input { appearance: none; width: 11px; height: 11px; flex: none; margin: 0 6px; border: 1px solid #000; background: #fff; }
.tree input:checked { background: linear-gradient(135deg, transparent 45%, #000 45% 75%, transparent 75%) 3px 1px / 6px 7px no-repeat, linear-gradient(45deg, transparent 30%, #000 30% 65%, transparent 65%) 0 4px / 5px 4px no-repeat, #fff; }
.tree label { padding: 0 2px; line-height: 28px; }
.tree .hl { background: #3399ff; color: #fff; }
.tree .field { padding-left: 101px; }
.tree .sw { padding-left: 75px; }
.sw i { width: 13px; height: 9px; margin-right: 9px; }
.sw .w { width: 14px; background: #e1e1e1; }
.sw .tract { width: 15px; height: 11px; border: 1px solid #6e6e6e; background: #f6fad2; }
.sw .nybb { width: 15px; height: 11px; border: 1px solid #6e6e6e; background: #ecbef2; }
.tbl .ic { width: 14px; margin: 0 7px 0 61px; }

.hscroll { display: flex; height: 24px; align-items: center; background: #ececec; flex: 1; }
.tree-box .hscroll { flex: none; }
.hscroll button, .vscroll button { width: 28px; height: 24px; display: grid; place-items: center; flex: none; }
.view-bar .hscroll button { width: 24px; }
.hscroll button::after, .vscroll button::after { content: ""; border: 6px solid transparent; }
.al::after { border-right-color: #333 !important; border-left: 0 !important; }
.ar::after { border-left-color: #333 !important; border-right: 0 !important; }
.au::after { border-bottom-color: #333 !important; border-top: 0 !important; }
.ad::after { border-top-color: #333 !important; border-bottom: 0 !important; }
.track { flex: 1; height: 100%; }
.thumb { display: block; height: 23px; border: 1px solid #9a9a9a; border-radius: 2px; background: repeating-linear-gradient(90deg, #555 0 2px, #ddd 2px 5px) center / 14px 11px no-repeat, linear-gradient(#f3f3f3 25%, #d4d5d8 30%, #c8c8ca); }
.toc-thumb { width: 72%; }
.map-thumb { width: 12%; margin-left: 64%; }

.data-view { flex: 1; display: grid; grid-template: 1fr 26px / 1fr 26px; border: 2px solid #8a8a8a; border-width: 2px 0 0 2px; }
.canvas { position: relative; background: #fff; border: 1px solid #e3e3e3; border-width: 0 1px 1px 0; overflow: hidden; }
.vscroll { display: flex; flex-direction: column; background: #f0f0f0; padding-right: 2px; border-right: 1px solid #e0e0e0; }
.vscroll .thumb { height: 120px; margin-top: 1199px; background: repeating-linear-gradient(#666 0 2px, #e4e4e4 2px 4px) center / 12px 10px no-repeat, linear-gradient(90deg, #f6f6f6 25%, #dadbde 30%, #c0c0c2); }
.view-bar { grid-column: 1 / 3; display: flex; padding: 0 28px 0 0; border-bottom: 2px solid #fff; }
.vb { width: 26px; height: 24px; display: grid; place-items: center; }
.vb.on { border: 1px solid #666; border-radius: 2px; background: #e2e2e2; }
.vb svg { width: 8px; height: 8px; }
.vsep { width: 1px; height: 22px; margin: 0 3px; background: #999; }
.status { height: 28px; }

.nyc { position: absolute; left: 1486px; top: 492px; width: 520px; height: 880px; }
.nyc path, .nyc polygon { vector-effect: non-scaling-stroke; stroke: #fff; stroke-width: 1; shape-rendering: crispEdges; }

.dialog { position: absolute; display: flex; flex-direction: column; border: 1px solid #55585c; border-radius: 8px; background: #fdfdfd; }
.dlg-title { height: 42px; display: flex; align-items: flex-start; justify-content: space-between; }
.dlg-title h2 { line-height: 46px; }
.dlg-x { width: 72px; height: 29px; border: 1px solid #aaaeb4; border-top: 0; border-radius: 0 0 5px 5px; }
.dlg-x svg { width: 18px; height: 16px; vertical-align: middle; }
.dlg-x.red { background: linear-gradient(#e9aaa2, #df8478 45%, #c93a26 50%, #d9664c); border-color: #5c2620; }
.client { border: 1px solid #7c8086; background: #f0f0f0; }
fieldset { --inset: 0px; margin: 0; padding: 0 0 0 var(--inset); min-width: 0; border: 1px solid #d5dfe5; border-radius: 4px; }
legend { margin-left: calc(6px - var(--inset)); padding: 0 2px; }
.btn { height: 33px; border: 1px solid #707070; border-radius: 3px; background: linear-gradient(#f3f3f3, #ebebeb 48%, #dcdcdc 52%, #cfcfcf); text-align: center; }
.btn:disabled { color: #838383; border-color: #adb2b5; background: #f4f4f4; }
.check { display: flex; align-items: center; gap: 5px; }
.check input { appearance: none; width: 19px; height: 19px; border: 1px solid #8e8f8f; background: linear-gradient(135deg, #cfd2d6, #f8f8f8); box-shadow: inset 0 0 0 2px #f4f4f4; }

.props { left: 238px; top: 192px; width: 985px; padding: 0 10px 10px; box-shadow: 0 3px 10px #0007; }
.props .dlg-title { padding-left: 1px; }
.props .client { padding-top: 12px; font: 16px/20px var(--sans); }
.tabs { display: grid; margin: 0 12px 0 10px; }
.tabs.r1 { grid-template-columns: 343fr 274fr 322fr; }
.tabs.r2 { grid-template-columns: 99fr 93fr 108fr 92fr 123fr 82fr 155fr 89fr 99fr; }
.tabs button { height: 26px; border: 1px solid #8c8e94; border-width: 1px 1px 0 0; background: linear-gradient(#f2f2f2, #ebebeb 45%, #dcdcdc 50%, #cfcfcf); }
.r2 button { height: 25px; }
.tabs button:first-child { border-left-width: 1px; }
.r1 button:first-child { padding-left: 112px; }
.tabs .active { position: relative; height: 29px; margin: -3px 0 -1px; background: #fff; padding-bottom: 4px; }
.panel { margin-left: 9px; padding: 0 0 108px 3px; border: 1px solid #8c8e94; border-right: 0; background: #fff; display: grid; grid-template-columns: 194px 640px; gap: 2px; }
.show-lbl { line-height: 24px; }
.show-list { height: 313px; padding: 3px 6px; border: 1px solid #828790; }
.show-list li { height: 22px; line-height: 22px; }
.show-list .sub { margin-left: 7px; border-left: 1px dotted #888; display: flex; align-items: center; }
.show-list .sub::before { content: ""; width: 8px; border-top: 1px dotted #888; }
.sub span { padding: 0 2px; }
.sub .cur { background: #f0f0f0; }
.africa { display: block; width: 193px; height: 139px; margin-top: 8px; }
.quant { padding-top: 11px; display: flex; flex-direction: column; }
.desc-row { display: flex; gap: 6px; padding-left: 9px; }
.desc { width: 535px; line-height: 33px; border: 1px solid #a0a0a0; border-width: 1px 0 0 1px; padding-left: 1px; }
.desc-row .btn { width: 88px; }
.groups { display: grid; grid-template-columns: 357px 269px; gap: 14px; margin-top: 6px; height: 107px; }
.fields { --inset: 10px; display: grid; grid-template-columns: 106px 229px; gap: 10px 0; align-content: start; align-items: center; padding-top: 5px; }
.manual { text-align: center; margin-top: 7px; line-height: 22px; }
.cls-row { display: flex; align-items: center; padding-left: 13px; margin-top: 10px; }
.cls-row label { width: 67px; }
.cls-row .combo { width: 61px; }
.cls-row .btn { width: 93px; margin-left: 21px; }
.ramp-row { display: flex; align-items: center; margin-top: 11px; padding-left: 5px; }
.ramp-row span { width: 112px; }
.ramp { width: 229px; padding: 3px; }
.ramp i { display: block; width: 196px; height: 20px; background: linear-gradient(90deg, #ffff80, #f2a430 50%, #6b0000); }
.grid-box { margin-top: 12px; height: 237px; padding: 1px; border: 1px solid #828790; }
.grid-box table { width: 100%; table-layout: fixed; border-collapse: collapse; }
.grid-box th { height: 26px; padding: 0 6px; text-align: left; font-weight: 400; border: 1px solid #dfe3e8; border-width: 0 1px 1px 0; background: linear-gradient(#fff 45%, #f5f6f8 50%); }
.grid-box th:nth-child(1) { width: 50px; padding-left: 5px; } .grid-box th:nth-child(2) { width: 280px; } .grid-box th:nth-child(3) { width: 280px; }
.grid-box td { height: 24px; padding: 0 0 0 2px; }
.grid-box td:first-child { padding-left: 6px; }
.grid-box td i { display: block; width: 44px; height: 21px; }
.adv-row { display: flex; justify-content: space-between; margin-top: 4px; }
.adv { width: 121px; display: flex; align-items: center; justify-content: center; position: relative; }
.adv .caret { position: absolute; right: 2px; }
.dlg-foot { display: flex; justify-content: flex-end; gap: 9px; padding: 16px 6px 7px; }
.dlg-foot .btn { width: 111px; }

.classify { left: 241px; top: 997px; width: 957px; padding: 0 8px 9px; border-color: #22262c; background: linear-gradient(100deg, #d6eaff, #b9dbfe 22%, #b5d8fd 85%, #d0e6fb) top / 100% 150px no-repeat, #b9dbfe; box-shadow: 0 4px 16px #000c, inset 0 0 0 1px #e8f4ff; }
.classify .dlg-title { padding-left: 1px; }
.classify .client { padding: 7px 7px 10px 7px; font-size: 15px; line-height: 18px; }
.classify .btn { height: 31px; }
.top { display: flex; gap: 31px; padding-left: 1px; }
.opts { width: 543px; }
.method { --inset: 20px; display: grid; grid-template-columns: 93px 406px; row-gap: 12px; align-items: center; padding-bottom: 9px; }
.method .combo { height: 27px; }
.method .short { width: 106px; }
.combo.grad { border: 1px solid #707070; border-radius: 3px; background: linear-gradient(#f3f3f3, #ebebeb 48%, #dcdcdc 52%, #cfcfcf); }
.excl { --inset: 104px; margin-top: 2px; padding-top: 12px; padding-bottom: 17px; }
.excl .btn { width: 129px; margin-right: 71px; float: left; }
.cols { display: flex; align-items: center; margin-top: 12px; height: 28px; }
.cols > label:first-child { width: 96px; }
.spin { display: flex; width: 70px; height: 28px; background: #fff; margin-right: 49px; border: 1px solid #e0e3ea; border-top-color: #abadb3; }
.spin input { width: 43px; border: 0; background: none; padding-left: 5px; appearance: textfield; font-size: 16px; }
.spin input::-webkit-inner-spin-button { appearance: none; }
.spin button { display: grid; place-items: center; width: 25px; height: 13px; border: 1px solid #b0b0b0; background: #eee; }
.up, .down { border: 4px solid transparent; border-bottom: 6px solid #5a6ea8; border-top: 0; }
.down { border-top: 6px solid #5a6ea8; border-bottom: 0; }
.check.std { width: 191px; }
.stats { --inset: 4px; flex: none; width: 345px; padding-top: 5px; padding-right: 6px; }
.stats table { display: block; height: 175px; border: 1px solid #828790; background: #fff; padding: 2px 8px 0 7px; border-spacing: 0; }
.stats tbody { display: block; }
.stats tr { display: flex; justify-content: space-between; height: 23px; line-height: 23px; }
.stats th, .stats td { padding: 0; font-weight: 400; }
.stats td, .breaks li { font-size: 16px; }
.bottom { display: flex; justify-content: space-between; margin-top: 4px; }
.hist-col { width: 750px; padding-top: 4px; }
.hist { height: 395px; margin-bottom: 11px; padding: 1px 15px 0 17px; border: 1px solid #888; border-color: #888 #e6e6e6 #e6e6e6 #888; }
.hist svg { display: block; width: 717px; height: 392px; background: #fff; font-family: var(--ui); font-size: 12px; }
.breaks { width: 156px; display: flex; flex-direction: column; padding-right: 1px; }
.brk-head { display: flex; justify-content: space-between; align-items: center; }
.brk-head .btn { width: 31px; }
.breaks ul { height: 306px; margin: 4px 0 13px; border: 1px solid #828790; background: #fff; padding: 2px 7px; }
.breaks li { height: 23px; line-height: 23px; }
.breaks > .btn { width: 111px; align-self: flex-end; }
.breaks .def { margin-bottom: 14px; border-color: #3c7fb1; background: linear-gradient(#eaf5fc, #dbeef9 48%, #c2e2f3 52%, #b4d9ee); box-shadow: inset 0 0 0 2px #3fd0f8; }
```
FILE: map.js
```js
const NS = 'http://www.w3.org/2000/svg';
const RAMP = ['', '#ffebbe', '#ffcd96', '#ffae70', '#ff914c', '#ff7128', '#ff5500'];
function el(parent, tag, attrs, text) {
  const n = document.createElementNS(NS, tag);
  for (const k in attrs) n.setAttribute(k, attrs[k]);
  if (text) n.textContent = text;
  parent.appendChild(n);
  return n;
}

/* ---- Census tract map ---- */
const nyc = document.querySelector('.nyc');
const shore = '1160,35 1270,62 1292,75 1380,95 1392,108 1390,135 1355,175 1280,232 1262,262 1205,310 1163,382 1160,400 1163,437 1170,500 1168,580 1220,630 1220,655 1222,685 1212,705 1230,712 1175,720 1138,757 1140,772 1190,778 1222,790 1230,808 1200,824 1185,815 1150,812 1125,835 1122,852 1145,862 1138,875 1095,890 1050,925 1000,975 965,1010 928,1038 898,1070 882,1102 882,1140 896,1180 890,1218 835,1273 825,1300 812,1338 783,1327 740,1347 705,1354 620,1357 590,1356 580,1362 540,1408 515,1440 502,1455 515,1467 498,1466 467,1497 450,1498 380,1530 337,1548 197,1508 273,1400 282,1360 310,1245 340,1150 362,1068 392,975 430,930 485,873 545,800 640,702 690,650 765,568 830,493 880,445 950,318 985,265 1045,182 1115,92';
const cp = el(el(nyc, 'defs', {}), 'clipPath', { id: 'shore' });
el(cp, 'polygon', { points: shore });
const land = el(nyc, 'g', { 'clip-path': 'url(#shore)' });
el(land, 'polygon', { points: shore, fill: RAMP[4] });

/* Avenues run at constant u, cross streets at constant v. */
const at = (u, v) => { const x = (u - 0.93 * v) / 1.27; return `${x.toFixed(1)},${(v + 0.29 * x).toFixed(1)}`; };
function band(u0, u1, breaks, colors) {
  for (let i = 0; i < colors.length; i++) {
    const a = breaks[i], b = breaks[i + 1];
    el(land, 'polygon', { points: [at(u0, a), at(u1, a), at(u1, b), at(u0, b)].join(' '), fill: RAMP[+colors[i]] });
  }
}

band(200, 1450, [82, 103, 128, 161, 176, 201, 213, 228, 252, 298, 346, 372, 395, 419, 444, 467, 491, 516, 540, 561, 570, 604, 619, 642, 678, 732, 782, 805, 958], '6556654462666666566465566555');
band(1450, 1523, [80, 105, 128, 152, 176, 240, 270, 290, 330, 350, 372, 394, 416, 438, 460, 482, 504, 526, 548, 570, 592, 614, 636, 660, 684, 708, 732, 756, 780, 804, 828, 852, 876, 900, 925, 950, 980, 1010, 1040], '55554445166566656636656446663536544554');
band(1523, 1580, [80, 130, 155, 180, 210, 235, 262, 285, 310, 340, 378], '5223344536');
band(1580, 1640, [100, 130, 150, 172, 195, 220, 245, 275, 300, 330, 378], '5566536254');
band(1640, 1680, [130, 165, 190, 215, 240, 265, 290, 310, 340, 362, 386], '5455532226');
band(1680, 1715, [190, 215, 240, 270, 295, 318, 342, 366, 388, 412], '656324466');
band(1715, 1773, [180, 230, 280, 300, 324, 346, 370, 392, 414, 436, 458, 480, 502, 524, 546, 568, 592, 616, 640, 664, 688, 712, 736, 760, 784, 808, 832, 856, 880, 905, 930, 955, 985, 1012, 1040, 1070], '63345666566366566666666666666665664');
band(1773, 1870, [220, 270, 300, 330, 356, 386, 410, 440, 490, 520, 545, 565, 588, 612, 640, 665, 688, 712, 738, 775], '3345564666366644421');
band(1640, 1715, [386, 408, 442, 462, 486, 510, 528, 548, 570, 592, 616, 640, 664, 688, 712, 740, 772, 805, 835, 860, 884, 908, 940, 970, 1000, 1030, 1060], '43312122322211233466652332');
el(land, 'path', { d: `M${at(1675, 340)} L${at(1675, 700)}`, fill: 'none' });
band(1523, 1580, [682, 708, 732, 758, 782, 806, 832, 856, 882, 906, 930, 955, 982, 1010, 1040], '63331122666564');
band(1580, 1640, [682, 706, 730, 756, 782, 810, 838, 864, 888, 914, 940, 968, 990, 1015, 1040], '11112223432345');
band(1773, 1840, [880, 950, 980, 1005, 1030, 1055, 1080], '665633');
el(land, 'polygon', { points: [at(1523, 378), at(1640, 380), at(1628, 682), at(1523, 682)].join(' '), fill: RAMP[1] });

const tracts = `
1 1160,35 1270,62 1292,75 1380,95 1345,118 1303,103 1295,115 1270,132 1240,137 1207,150 1115,92
3 1380,97 1392,108 1390,135 1355,175 1280,232 1265,230 1262,208 1245,188 1285,180 1345,118
3 1303,103 1345,118 1337,127 1310,120 1295,112
4 1295,115 1337,127 1313,148 1272,138
4 1115,92 1207,150 1228,175 1195,185 1180,205 1140,205 1045,182
2 1045,182 1138,207 1100,262 1078,262 1065,274 985,265
4 985,265 1065,274 1062,290 1098,292 1080,328 1068,345 950,318
5 950,318 1068,347 1058,370 1070,382 932,352
6 1207,150 1240,137 1272,132 1256,148 1222,158
6 1256,148 1290,140 1313,148 1285,180
6 1222,158 1256,148 1285,178 1240,188
6 1195,185 1228,175 1240,188 1200,200 1180,205
6 1180,205 1240,188 1225,208 1190,222 1168,225
6 1138,207 1153,210 1130,237 1133,255 1130,270 1097,262
2 1150,205 1172,202 1155,240 1130,237
6 1168,225 1190,222 1212,218 1185,250 1155,240
5 1212,218 1238,210 1243,222 1210,255 1185,250
6 1133,238 1185,250 1155,285 1133,272
5 1185,250 1210,255 1215,265 1178,293 1155,285
1 1225,205 1245,188 1262,208 1265,230 1280,232 1262,262 1205,310 1163,382 1145,385 1100,418 1090,410 1130,365 1145,350 1140,335 1180,293 1220,275 1220,258 1240,225
5 1078,262 1133,272 1120,290 1098,292 1062,290 1068,270
6 1098,292 1120,290 1135,278 1155,285 1130,318 1095,308
6 1155,285 1178,293 1155,322 1130,318
6 1095,308 1155,322 1130,343 1080,328
2 1080,328 1130,343 1118,362 1068,347
6 1068,350 1100,362 1098,392 1058,388 1058,370
3 1100,362 1130,367 1100,398
2 1080,395 1100,400 1090,418 1070,412
5 1163,382 1160,400 1163,437 1110,425 1100,418 1145,385
5 1163,437 1170,502 1140,500 1135,470 1110,425
6 1170,503 1168,565 1140,575 1120,570 1155,515
3 1140,575 1168,568 1168,580 1220,630 1180,640 1110,600
3 1160,660 1200,622 1220,630 1220,655 1222,685
4 1160,662 1222,687 1212,705 1230,712 1175,720 1120,705
6 1120,706 1175,720 1138,757 1140,772 1190,778 1222,790 1230,808 1200,824 1185,815 1150,812 1118,785 1060,775
6 1060,775 1118,785 1150,812 1125,835 1122,852 1055,850 1080,820 1030,810
1 1005,485 1038,488 1025,525 995,553 975,530
1 890,562 950,572 925,643 872,625 885,607 862,597
4 915,572 935,575 925,592 908,588
2 1075,855 1125,852 1145,862 1138,875 1095,890 1050,925 1015,918
6 1015,918 1050,925 1000,975 928,1038 893,1025
1 838,1003 893,1025 928,1038 905,1062 815,1035
2 815,1035 905,1062 882,1102 780,1070
3 780,1070 882,1102 882,1140 896,1172 735,1122
5 735,1122 893,1172 896,1182 720,1138
6 720,1138 893,1183 890,1225 775,1190 700,1165
5 775,1190 890,1223 840,1262 735,1240
4 725,1238 840,1262 835,1273 715,1252
5 715,1252 835,1273 825,1300 705,1275
4 362,1068 445,1080 472,1095 467,1127 346,1125
4 346,1125 467,1127 462,1150 430,1155 338,1150
2 338,1150 430,1155 462,1150 457,1180 422,1180 418,1187 329,1180
2 329,1180 418,1187 422,1180 498,1185 470,1232 418,1205 415,1215 320,1206
4 320,1206 415,1213 447,1222 437,1275 407,1270 405,1253 312,1245
6 312,1245 405,1253 385,1312 298,1298
4 298,1298 385,1312 365,1360 340,1365 282,1360
1 282,1360 340,1365 385,1360 395,1402 277,1385
1 277,1385 395,1402 515,1440 502,1455 515,1467 498,1466 467,1497 337,1548 197,1508 273,1400
2 385,1362 405,1348 430,1355 445,1375 485,1392 540,1408 515,1440 395,1402
6 472,1093 525,1108 510,1130 467,1127
6 467,1127 510,1130 512,1150 500,1185 457,1180
5 525,1108 580,1125 530,1155 500,1185 510,1130
6 530,1155 562,1165 540,1195 498,1185
3 498,1185 540,1198 515,1215 520,1225 480,1232 470,1228
3 447,1222 480,1232 515,1250 470,1290 437,1275
4 520,1212 552,1220 525,1250 480,1232
1 540,1225 552,1232 525,1262 508,1252
2 508,1252 525,1260 510,1285 480,1305 443,1310
4 405,1270 470,1290 443,1310 388,1296
5 388,1296 443,1310 400,1360 365,1360
4 443,1310 480,1305 550,1325 580,1362 565,1372 490,1335
6 435,1312 490,1335 570,1372 555,1385 480,1365 420,1330
6 420,1330 480,1365 555,1385 540,1408 485,1392 445,1375 405,1348
4 480,1305 515,1298 552,1295 580,1362 540,1325
1 515,1298 550,1295 555,1305 517,1318
6 552,1235 580,1238 560,1280 552,1293 510,1285 525,1262
6 580,1238 650,1245 630,1285 555,1293
3 650,1250 690,1260 680,1290 630,1275
6 680,1238 725,1250 705,1272 680,1260
1 625,1272 720,1287 620,1290
6 552,1293 598,1290 605,1325 620,1357 580,1362 560,1330
6 598,1290 650,1290 655,1356 620,1357 605,1325
2 650,1290 668,1290 676,1353 655,1356
6 668,1290 720,1288 760,1305 783,1327 740,1347 705,1354 676,1353
1 720,1280 825,1300 812,1338 783,1327 760,1300`;
const draw = (parent, line) => { const [c, ...pts] = line.split(' '); el(parent, 'polygon', { points: pts.join(' '), fill: RAMP[c] }); };
tracts.trim().split('\n').forEach(l => draw(land, l));
['6 1338,75 1375,57 1390,60 1410,72 1413,95 1398,108 1383,95 1340,82',
 '1 1240,632 1270,632 1285,650 1360,675 1380,700 1380,718 1340,745 1290,780 1235,808 1222,790 1190,778 1140,772 1138,757 1175,720 1230,712 1212,705 1222,685 1220,655',
 '1 138,1390 158,1400 152,1406', '1 70,1463 90,1460 107,1473 100,1482 85,1477'].forEach(l => draw(nyc, l));

/* ---- Histogram ---- */
const hist = document.getElementById('hist');
const counts = [13,2,3,1,4,6,3,4,4,11,5,11,11,4,3,8,5,5,4,8,2,7,9,9,6,5,11,7,8,5,3,9,10,3,8,8,7,9,1,2,4,1,3,5,4,5,4,3,1,1,0,1,1,1,1,0,1,2,1,1,0,0,0,0,0,0,0,1,0,1,0,0,0,0,0,0,0,1];
counts[99] = 1;
const X0 = 63, Y0 = 364, W = 605, U = 22.2;
counts.forEach((n, i) => { if (n) el(hist, 'rect', { x: X0 + Math.round(i * W / 100), y: Math.round(Y0 - n * U), width: i % 2 ? 5 : 6, height: Math.round(n * U), fill: '#c0c0c0' }); });
[500, 1000, 1500, 2000, 2500].forEach((b, i) => {
  const x = Math.round(X0 + b / 8014 * W);
  el(hist, 'rect', { x, y: i ? 76 : 73, width: 1, height: i ? 288 : 291, fill: i ? '#0000ff' : '#222' });
  el(hist, 'text', { transform: `translate(${x - 3} ${i ? 75 : 72}) rotate(-90)`, 'font-size': 11, 'font-family': 'Liberation Sans' }, b + '.000000');
});
el(hist, 'path', { d: `M${X0} 32V364H668`, fill: 'none', stroke: '#000', 'shape-rendering': 'crispEdges' });
[0, 5, 10, 15].forEach(n => {
  const y = Math.round(Y0 - n * U);
  el(hist, 'rect', { x: n ? 56 : 63, y, width: n ? 14 : 1, height: 1 });
  el(hist, 'text', { x: 55, y: y + 4, 'text-anchor': 'end' }, String(n));
});
['0.000000', '2003.500000', '4007.000000', '6010.500000', '8014.000000'].forEach((t, i) => {
  el(hist, 'rect', { x: X0 + i * 151, y: 364, width: 1, height: 10 });
  el(hist, 'text', { x: X0 + i * 151, y: 389, 'text-anchor': 'middle' }, t);
});
```
